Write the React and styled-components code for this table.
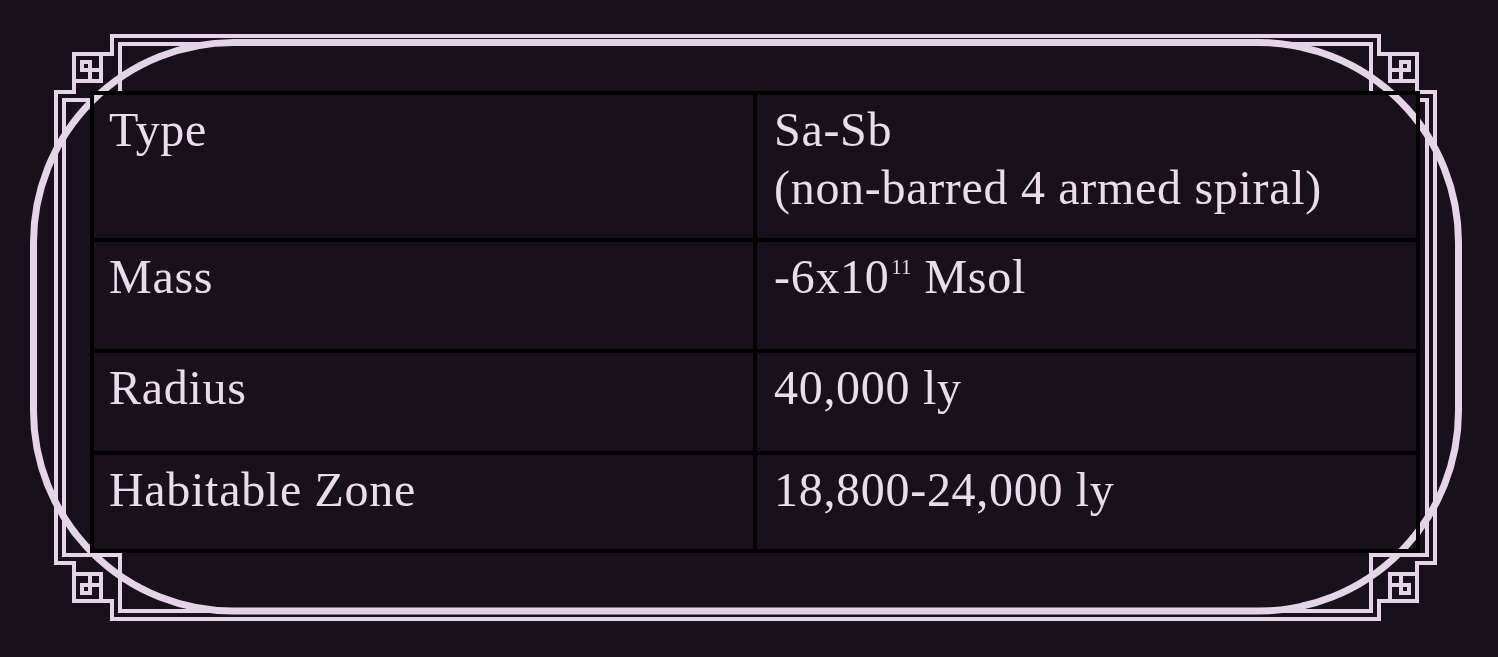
import React from "react";
import styled, { createGlobalStyle } from "styled-components";

const INK = "#e5d3e7";
const BG = "#18111b";

const GlobalStyle = createGlobalStyle`
  html, body {
    margin: 0;
    padding: 0;
    background: ${BG};
  }
  body {
    font-family: "Liberation Serif", "DejaVu Serif", serif;
  }
`;

const Page = styled.div`
  position: relative;
  box-sizing: border-box;
  width: 1498px;
  height: 657px;
  overflow: hidden;
  background: ${BG};
  padding: 91px 0 0 90px;
`;

const Ornament = styled.svg`
  position: absolute;
  top: 0;
  left: 0;
  pointer-events: none;
`;

const Table = styled.div`
  position: relative;
  box-sizing: border-box;
  display: grid;
  width: 1330px;
  grid-template-columns: 1fr 1fr;
  grid-template-rows: 147px 111px 102px 98px;
  border-top: 4px solid #000;
  border-left: 4px solid #000;
`;

const Cell = styled.div`
  box-sizing: border-box;
  border-right: 4px solid #000;
  border-bottom: 4px solid #000;
  padding: 6px 0 0 ${(p) => (p.$value ? 17 : 15)}px;
  font-size: 48px;
  line-height: 58px;
  letter-spacing: 0.7px;
  color: #eadcea;
`;

const Sup = styled.sup`
  font-size: 20px;
  line-height: 0;
  vertical-align: 19px;
  letter-spacing: 0.5px;
  margin-left: 2px;
`;

const rows = [
  { label: "Type", value: ["Sa-Sb", "(non-barred 4 armed spiral)"] },
  {
    label: "Mass",
    value: [
      <>
        -6x10<Sup>11</Sup> Msol
      </>,
    ],
  },
  { label: "Radius", value: ["40,000 ly"] },
  { label: "Habitable Zone", value: ["18,800-24,000 ly"] },
];

const Corner = ({ transform }) => (
  <g transform={transform}>
    <path d="M0 56 L18 56 L18 18 L56 18 L56 0" />
    <path d="M18 45 L45 45 L45 18" />
    <rect x="26" y="26" width="8" height="8" />
    <path d="M34 34 L34 45 M34 34 L45 34" />
    <path d="M8 64 L64 64 L64 8" />
  </g>
);

const Frame = () => (
  <Ornament width="1498" height="657" viewBox="0 0 1498 657">
    <defs>
      <mask id="tableHole" maskUnits="userSpaceOnUse" x="0" y="0" width="1498" height="657">
        <rect x="0" y="0" width="1498" height="657" fill="#fff" />
        <rect x="90" y="91" width="1330" height="462" fill="#000" />
      </mask>
    </defs>
    <g fill="none" stroke={INK} strokeWidth="4" strokeLinecap="square" strokeLinejoin="miter">
      <path d="M112 36 L1379 36 M112 619 L1379 619 M56 92 L56 563 M1435 92 L1435 563" />
      <path d="M120 44 L1371 44 M120 611 L1371 611 M64 100 L64 555 M1427 100 L1427 555" />
      <g mask="url(#tableHole)">
        <Corner transform="translate(56 36)" />
        <Corner transform="translate(1435 36) scale(-1 1)" />
        <Corner transform="translate(56 619) scale(1 -1)" />
        <Corner transform="translate(1435 619) scale(-1 -1)" />
      </g>
    </g>
    <rect x="33.5" y="42.5" width="1425" height="568.5" rx="200" ry="200" fill="none" stroke={INK} strokeWidth="7" />
  </Ornament>
);

export default function App() {
  return (
    <>
      <GlobalStyle />
      <Page>
        <Frame />
        <Table>
          {rows.map((r) => (
            <React.Fragment key={r.label}>
              <Cell>{r.label}</Cell>
              <Cell $value>
                {r.value.map((line, i) => (
                  <div key={i}>{line}</div>
                ))}
              </Cell>
            </React.Fragment>
          ))}
        </Table>
      </Page>
    </>
  );
}
